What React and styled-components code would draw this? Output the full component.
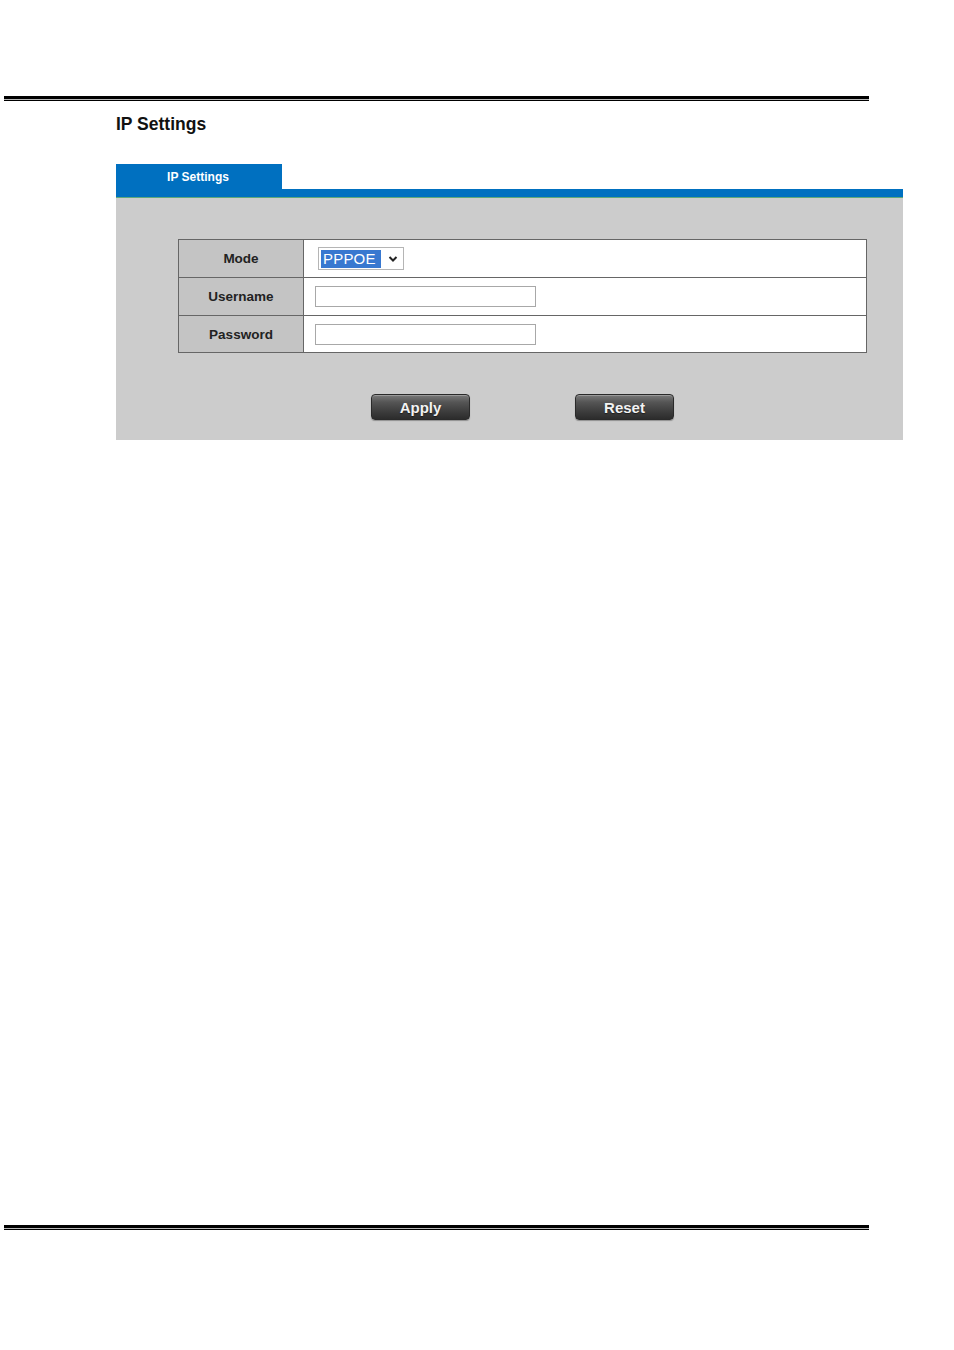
import React from "react";
import styled, { createGlobalStyle } from "styled-components";

const Global = createGlobalStyle`
  html, body { margin: 0; padding: 0; background: #fff; }
  body { font-family: "Liberation Sans", Arial, sans-serif; }
`;

const Page = styled.div`
  width: 954px;
  min-height: 1350px;
  padding-top: 96px;
  box-sizing: border-box;
`;

const Rule = styled.div`
  margin-left: 4px;
  width: 865px;
  height: 1px;
  border-top: 3px solid #000;
  border-bottom: 1px solid #000;
  background: #b8b8b8;
  margin-top: ${(p) => p.$top || 0}px;
`;

const Content = styled.div`
  padding-left: 116px;
  width: 787px;
`;

const Title = styled.h1`
  margin: 13px 0 0;
  font-size: 17.5px;
  line-height: 21px;
  font-weight: bold;
  color: #111;
`;

const TabRow = styled.div`
  margin-top: 29px;
  display: flex;
  height: 25px;
`;

const Tab = styled.div`
  width: 166px;
  background: #0070c0;
  color: #fff;
  font-size: 12px;
  font-weight: bold;
  display: flex;
  align-items: center;
  justify-content: center;
  padding-right: 2px;
  box-sizing: border-box;
`;

const Bar = styled.div`
  height: 8px;
  background: #0070c0;
  border-bottom: 1px solid #5fa87a;
`;

const Panel = styled.div`
  background: #cccccc;
  padding: 41px 36px 20px 62px;
`;

const Table = styled.div`
  display: grid;
  grid-template-columns: 125px 1fr;
  grid-template-rows: 38px 38px 37px;
  border: 1px solid #666;
  border-bottom: none;
`;

const Label = styled.div`
  background: #c4c4c4;
  border-right: 1px solid #666;
  border-bottom: 1px solid #666;
  display: flex;
  align-items: center;
  justify-content: center;
  font-size: 13.5px;
  font-weight: bold;
  color: #222;
  box-sizing: border-box;
`;

const Value = styled.div`
  box-sizing: border-box;
  background: #fff;
  border-bottom: 1px solid #666;
  display: flex;
  align-items: center;
  padding-left: ${(p) => p.$pad || 11}px;
`;

const Select = styled.div`
  width: 86px;
  height: 23px;
  box-sizing: border-box;
  border: 1px solid #b5b5b5;
  background: #fff;
  display: flex;
  align-items: center;
  padding-left: 2px;
`;

const Selected = styled.span`
  background: #3878d0;
  color: #fff;
  font-size: 15px;
  line-height: 18px;
  padding: 0 5px 0 2px;
  letter-spacing: 0.2px;
`;

const Chevron = styled.svg`
  margin-left: 7px;
  width: 10px;
  height: 8px;
`;

const Input = styled.div`
  width: 221px;
  height: 21px;
  box-sizing: border-box;
  border: 1px solid #a8a8a8;
  background: #fff;
`;

const Buttons = styled.div`
  display: flex;
  justify-content: center;
  gap: 105px;
  margin-top: 41px;
`;

const Button = styled.button`
  width: 99px;
  height: 26px;
  border: 1px solid #2a2a2a;
  border-radius: 4px;
  background: linear-gradient(to bottom, #7a7a7a 0%, #555 30%, #3c3c3c 70%, #2c2c2c 100%);
  box-shadow: inset 0 1px 0 rgba(255,255,255,0.25), 0 1px 1px rgba(0,0,0,0.3);
  color: #f2f2f2;
  font-family: "Liberation Sans", Arial, sans-serif;
  font-size: 15px;
  font-weight: bold;
  padding: 1px 0 0;
  text-shadow: 0 1px 1px rgba(0,0,0,0.5);
`;

export default function App() {
  return (
    <>
      <Global />
      <Page>
        <Rule />
        <Content>
          <Title>IP Settings</Title>
          <TabRow>
            <Tab>IP Settings</Tab>
          </TabRow>
          <Bar />
          <Panel>
            <Table>
              <Label>Mode</Label>
              <Value $pad={14}>
                <Select>
                  <Selected>PPPOE</Selected>
                  <Chevron viewBox="0 0 10 8">
                    <path d="M1.5 2 L5 5.5 L8.5 2" fill="none" stroke="#222" strokeWidth="2" />
                  </Chevron>
                </Select>
              </Value>
              <Label>Username</Label>
              <Value>
                <Input />
              </Value>
              <Label>Password</Label>
              <Value>
                <Input />
              </Value>
            </Table>
            <Buttons>
              <Button>Apply</Button>
              <Button>Reset</Button>
            </Buttons>
          </Panel>
        </Content>
        <Rule $top={785} />
      </Page>
    </>
  );
}
